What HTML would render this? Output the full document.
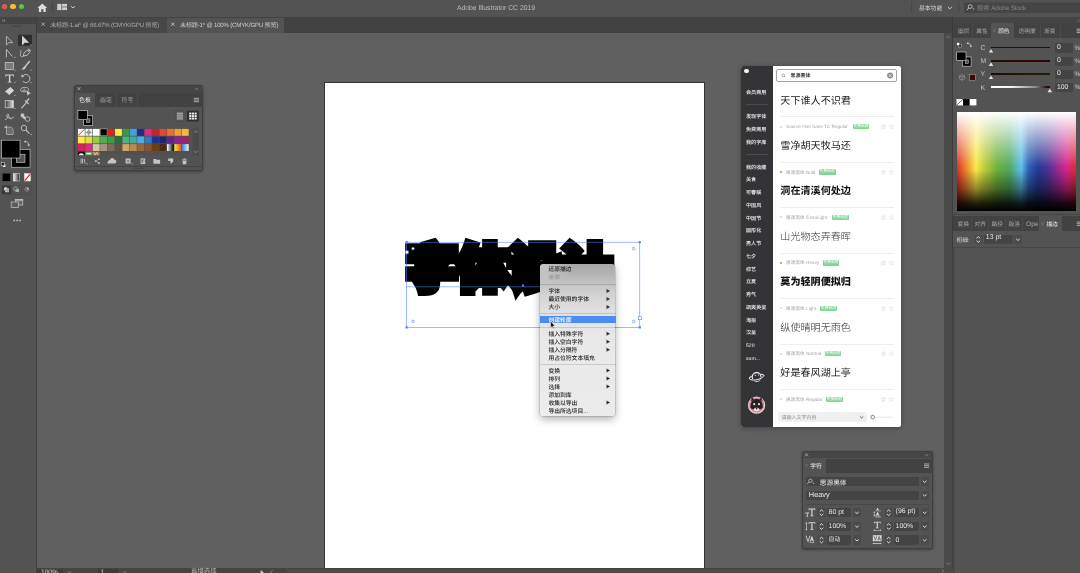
<!DOCTYPE html>
<html lang="zh"><head><meta charset="utf-8"><title>Adobe Illustrator CC 2019</title>
<style>
*{box-sizing:border-box;margin:0;padding:0}
html,body{width:1080px;height:573px;overflow:hidden;background:#606060}
body{position:relative;font-family:"Liberation Sans","Noto Sans CJK SC",sans-serif;color:#d6d6d6;font-size:6.5px;text-rendering:geometricPrecision}
.a{position:absolute}
.t{position:absolute;white-space:nowrap;line-height:10px;height:10px}
svg{position:absolute;overflow:visible}
/* ---------- chrome ---------- */
#topbar{left:0;top:0;width:1080px;height:17px;background:#535353}
#tabbar{left:36px;top:17px;width:918px;height:16px;background:#424242}
#tools{left:0;top:17px;width:36.5px;height:556px;background:#535353;border-right:1px solid #3e3e3e}
#toolhead{left:0;top:17px;width:36px;height:7px;background:#444}
#rdock{left:953px;top:17px;width:127px;height:556px;background:#535353}
#vscroll{left:944px;top:33px;width:9.4px;height:540px;background:#4a4a4a;border-right:1.2px solid #3b3b3b}
#status{left:37px;top:568px;width:916px;height:5px;background:#4a4a4a}
#artboard{left:323.5px;top:81.5px;width:381px;height:487px;background:#fff;border:0.7px solid #333}
.tab{top:17.5px;height:15px}
/* ---------- floating panels ---------- */
.panel{background:#535353;border:1px solid #3f3f3f;border-radius:2px;box-shadow:0 1px 3px rgba(0,0,0,.35)}
.ptitle{background:#464646;left:0;top:0;right:0;height:7px}
.ptabs{background:#424242;left:0;right:0}
.field{background:#444;border-radius:1px}
.dd{background:#4b4b4b;border-radius:1px}
</style></head><body><div id="root" style="position:absolute;left:0;top:0;width:1080px;height:573px;will-change:transform">

<!-- ===== canvas / artboard ===== -->
<div class="a" id="artboard"></div>

<!-- ===== top application bar ===== -->
<div class="a" id="topbar"></div>
<div class="a" id="tabbar"></div>
<div class="a" id="tools"></div>
<div class="a" id="toolhead"></div>
<div class="a" id="vscroll"></div>
<div class="a" id="status"></div>
<div class="a" id="rdock"></div>
<div class="a" style="left:952.2px;top:17px;width:1.2px;height:17px;background:#3b3b3b"></div>


<!-- top bar content -->
<div class="a" style="left:1.7px;top:3.6px;width:5.6px;height:5.6px;border-radius:50%;background:#ee5f57"></div>
<div class="a" style="left:3.7px;top:5.6px;width:1.6px;height:1.6px;border-radius:50%;background:#7c1510"></div>
<div class="a" style="left:10.2px;top:3.6px;width:5.6px;height:5.6px;border-radius:50%;background:#f6be2f"></div>
<div class="a" style="left:18.7px;top:3.6px;width:5.6px;height:5.6px;border-radius:50%;background:#5fc73a"></div>
<svg style="left:0;top:0" width="1080" height="17" viewBox="0 0 1080 17">
  <!-- home -->
  <path d="M42.3 3.6 L37.4 8 H38.9 V12 H41.2 V9.3 H43.4 V12 H45.7 V8 H47.2 Z" fill="#dcdcdc"/>
  <rect x="52.2" y="2.5" width="0.8" height="10.5" fill="#474747"/>
  <!-- layout icon -->
  <rect x="57.2" y="3.9" width="4.2" height="6.2" fill="#cfcfcf"/>
  <rect x="62.1" y="3.9" width="4.9" height="2.7" fill="#cfcfcf"/>
  <rect x="62.1" y="7.3" width="4.9" height="2.8" fill="#cfcfcf"/>
  <path d="M71 6.2 L73 8 L75 6.2" fill="none" stroke="#d8d8d8" stroke-width="0.9"/>
  <rect x="911.3" y="2" width="0.8" height="11" fill="#474747"/>
  <path d="M947.8 7 L949.8 8.8 L951.8 7" fill="none" stroke="#d8d8d8" stroke-width="0.9"/>
  <rect x="958.6" y="2" width="0.8" height="11" fill="#474747"/>
  <rect x="964" y="2.4" width="120" height="10.6" rx="1" fill="#454545"/>
  <circle cx="970.2" cy="6.6" r="1.9" fill="none" stroke="#cfcfcf" stroke-width="0.8"/>
  <path d="M968.8 8 L966.8 10.2" stroke="#cfcfcf" stroke-width="0.9"/>
  <path d="M972.6 8.6 h2 l-1 1.1z" fill="#cfcfcf"/>
</svg>
<div class="t" style="left:396px;width:200px;text-align:center;top:3.5px;font-size:6.9px;color:#bdbdbd;letter-spacing:-0.05px">Adobe Illustrator CC 2019</div>
<div class="t" style="left:919px;top:3.8px;font-size:5.8px;color:#dedede">基本功能</div>
<div class="t" style="left:977px;top:3.8px;font-size:6.4px;letter-spacing:-0.12px;color:#858585">搜索 Adobe Stock</div>

<!-- document tabs -->
<div class="a tab" style="left:37px;width:129.5px;background:#474747"></div>
<div class="a tab" style="left:167px;width:117px;background:#535353"></div>
<svg style="left:0;top:17px" width="300" height="16" viewBox="0 17 300 16">
  <path d="M41.6 22.6 l3.2 3.2 m0 -3.2 l-3.2 3.2" stroke="#cfcfcf" stroke-width="0.7"/>
  <path d="M171.2 22.6 l3.2 3.2 m0 -3.2 l-3.2 3.2" stroke="#e4e4e4" stroke-width="0.7"/>
</svg>
<div class="t" style="left:50.2px;top:21.2px;font-size:6.1px;letter-spacing:-0.19px;color:#adadad">未标题-1.ai* @ 66.67% (CMYK/GPU 预览)</div>
<div class="t" style="left:180px;top:21.2px;font-size:6.1px;letter-spacing:-0.19px;color:#d0d0d0">未标题-1* @ 100% (CMYK/GPU 预览)</div>


<!-- ===== tools panel ===== -->
<svg style="left:0;top:0" width="37" height="573" viewBox="0 0 37 573">
  <g fill="#8a8a8a"><rect x="2.4" y="19.4" width="0.9" height="2.4"/><rect x="4.2" y="19.4" width="0.9" height="2.4"/></g>
  <rect x="12" y="25.4" width="10" height="1.3" rx="0.6" fill="#454545"/>
  <!-- row 1 -->
  <rect x="18" y="34.8" width="14" height="11" rx="1" fill="#2e2e2e"/>
  <path d="M6.4 36.2 V45 L8.9 42.6 H12.8 Z" fill="none" stroke="#bcbcbc" stroke-width="0.9" stroke-linejoin="miter"/>
  <path d="M22 35.4 V45.4 L24.8 42.7 H29.2 Z" fill="#d4d4d4"/>
  <path d="M31.4 44.1 v1.3 h-1.3z" fill="#d4d4d4"/>
  <!-- row 2 -->
  <path d="M6.4 57.3 V49.4 L12.4 56.6" fill="none" stroke="#c6c6c6" stroke-width="0.9"/>
  <path d="M15.3 56.6 v1.3 h-1.3z" fill="#c6c6c6"/>
  <path d="M20.6 50.2 c1.2 1.6 -1.4 4.4 0.2 6 c0.8 0.8 2.2 0.4 3 -0.4" fill="none" stroke="#c6c6c6" stroke-width="0.8"/>
  <path d="M23.4 56 L24 52.8 L27.2 50.2 L29.6 52.4 L27.2 55.2 Z" fill="none" stroke="#c6c6c6" stroke-width="0.9"/>
  <path d="M27.8 49.6 l1 -1 l2.2 2.2 l-1 1z" fill="#c6c6c6"/>
  <!-- row 3 -->
  <rect x="5.2" y="62.6" width="8.2" height="6.8" fill="#7a7a7a" stroke="#c6c6c6" stroke-width="0.8"/>
  <path d="M15.3 69.2 v1.3 h-1.3z" fill="#c6c6c6"/>
  <path d="M29.4 61.6 L24.6 67.2" stroke="#c6c6c6" stroke-width="1.5" stroke-linecap="round"/>
  <path d="M24.8 66.6 c-1.6 0 -1.6 2 -3.6 2.8 c2.4 0.6 4.6 -0.4 4.6 -1.9z" fill="#c6c6c6"/>
  <path d="M31.4 69.2 v1.3 h-1.3z" fill="#c6c6c6"/>
  <!-- row 4 -->
  <path d="M5.3 74.6 h8.6 v2 h-0.7 l-0.4 -1.1 h-2.5 v6.1 l1.3 0.3 v0.6 h-4 v-0.6 l1.3 -0.3 v-6.1 h-2.5 l-0.4 1.1 h-0.7z" fill="#d4d4d4"/>
  <path d="M15.3 81.6 v1.3 h-1.3z" fill="#c6c6c6"/>
  <path d="M22.6 76 a4.1 4.1 0 1 1 0.2 5.3" fill="none" stroke="#c6c6c6" stroke-width="0.9"/>
  <path d="M21.2 74.4 l0.4 3.2 l2.8 -1.4z" fill="#c6c6c6"/>
  <path d="M31.4 81.6 v1.3 h-1.3z" fill="#c6c6c6"/>
  <!-- row 5 -->
  <path d="M5 91.4 L10.4 87 L14.2 90.6 L9 95.2 Z" fill="#d4d4d4"/>
  <path d="M6.6 92.8 l2.4 2.4" stroke="#535353" stroke-width="0.7"/>
  <path d="M15.3 94.6 v1.3 h-1.3z" fill="#c6c6c6"/>
  <path d="M21 88.6 c1.4 -1.6 6.6 -1.8 7.6 0.2 c0.6 1.4 -0.6 2.6 -2.2 2.8 c-2 0.4 -5 0.2 -5.8 -0.9 c-0.6 -0.8 -0.2 -1.6 0.4 -2.1z" fill="none" stroke="#c6c6c6" stroke-width="0.8"/>
  <path d="M22.2 90.2 h4 m-2 -1.6 v3" stroke="#c6c6c6" stroke-width="0.6"/>
  <path d="M26.6 90.6 L31 93.6 L28.8 94 L27.6 96 Z" fill="#d4d4d4"/>
  <!-- row 6 -->
  <defs><linearGradient id="gtool" x1="0" x2="1"><stop offset="0" stop-color="#3a3a3a"/><stop offset="1" stop-color="#e6e6e6"/></linearGradient>
  <linearGradient id="gbtn" x1="0" x2="1"><stop offset="0" stop-color="#fff"/><stop offset="1" stop-color="#222"/></linearGradient></defs>
  <rect x="5.2" y="100.6" width="8.2" height="7.2" fill="url(#gtool)" stroke="#c6c6c6" stroke-width="0.8"/>
  <path d="M15.3 107.6 v1.3 h-1.3z" fill="#c6c6c6"/>
  <path d="M21.4 108.4 L26.6 102.4" stroke="#c6c6c6" stroke-width="1.1"/>
  <path d="M25.6 101 l2.6 2.4 m-1.8 -1.8 l2.4 -2.6" stroke="#c6c6c6" stroke-width="1.4" stroke-linecap="round"/>
  <!-- row 7 -->
  <path d="M5 119.8 c2 -0.6 3 -2.4 3.2 -5.6 m-2.4 1 c2.4 3.4 5.2 4 8.4 1.6 m-6.4 -3.2 c0.2 2.4 1.6 4.4 3.6 5.6" fill="none" stroke="#c6c6c6" stroke-width="0.8"/>
  <rect x="20.8" y="113.6" width="3.4" height="3.4" fill="#c6c6c6"/>
  <path d="M22.4 116 l3 2.6" stroke="#c6c6c6" stroke-width="2.4"/>
  <circle cx="27.6" cy="119" r="2.3" fill="#535353" stroke="#c6c6c6" stroke-width="0.8"/>
  <!-- row 8 -->
  <path d="M6.6 125.4 v9 h6.4 v-5.4 l-1.8 -1.8 h-6.8 M4.4 127.2 h2.2" fill="none" stroke="#c6c6c6" stroke-width="0.8"/>
  <rect x="7.2" y="127.8" width="5.2" height="6" fill="#6e6e6e"/>
  <circle cx="23.9" cy="128" r="2.7" fill="none" stroke="#c6c6c6" stroke-width="0.9"/>
  <path d="M25.9 130 l3.6 3.6" stroke="#c6c6c6" stroke-width="1.1"/>
  <path d="M31.8 133.6 v1.3 h-1.3z" fill="#c6c6c6"/>
  <!-- fill / stroke -->
  <rect x="11.6" y="149.6" width="18.4" height="17.6" fill="#000" stroke="#d0d0d0" stroke-width="0.6"/>
  <rect x="16.4" y="154.2" width="8.6" height="8.4" fill="#535353" stroke="#d0d0d0" stroke-width="0.6"/>
  <rect x="1.6" y="140.2" width="18.4" height="17.8" fill="#000" stroke="#d0d0d0" stroke-width="0.6"/>
  <path d="M25.2 141.6 c2.4 0 3.6 1.2 3.6 3.6" fill="none" stroke="#c6c6c6" stroke-width="0.8"/>
  <path d="M25.6 140.2 v2.8 l-1.8 -1.4z M27.4 144.6 h2.8 l-1.4 1.8z" fill="#c6c6c6"/>
  <rect x="2.6" y="164" width="3.2" height="3.2" fill="#fff" stroke="#222" stroke-width="0.4"/>
  <rect x="1.2" y="162.6" width="3.2" height="3.2" fill="#222" stroke="#ddd" stroke-width="0.5"/>
  <!-- color/gradient/none -->
  <rect x="1.9" y="172.8" width="9" height="9" fill="#474747"/>
  <rect x="2.7" y="173.6" width="7.4" height="7.4" fill="#000"/>
  <rect x="13.4" y="173.6" width="6.2" height="7.4" fill="url(#gbtn)" stroke="#e8e8e8" stroke-width="0.5"/>
  <rect x="24.4" y="173.6" width="6.2" height="7.4" fill="#fff" stroke="#e8e8e8" stroke-width="0.5"/>
  <path d="M24.6 180.8 L30.4 173.8" stroke="#e0261c" stroke-width="1.2"/>
  <!-- draw modes -->
  <rect x="1.9" y="185.4" width="9.4" height="8.8" fill="#3a3a3a"/>
  <rect x="11.6" y="185.4" width="10" height="8.8" fill="none" stroke="#4b4b4b" stroke-width="0.5"/>
  <rect x="21.6" y="185.4" width="10" height="8.8" fill="none" stroke="#4b4b4b" stroke-width="0.5"/>
  <circle cx="5.6" cy="188.8" r="1.9" fill="#c6c6c6"/><rect x="5.4" y="188.8" width="3.4" height="3.2" fill="#aaa" stroke="#ddd" stroke-width="0.4"/>
  <circle cx="15.6" cy="188.8" r="1.9" fill="none" stroke="#c6c6c6" stroke-width="0.6"/><rect x="15.6" y="189" width="3.4" height="3" fill="#aaa"/>
  <circle cx="26.8" cy="189.2" r="1.9" fill="none" stroke="#aaa" stroke-width="0.6"/><rect x="26.8" y="188" width="1.6" height="1.6" fill="#ccc"/>
  <!-- screen mode -->
  <rect x="15.4" y="199.4" width="7.4" height="5.6" fill="#666" stroke="#c6c6c6" stroke-width="0.7"/>
  <rect x="11.2" y="202" width="7.4" height="5.6" fill="#5d5d5d" stroke="#c6c6c6" stroke-width="0.7"/>
  <rect x="15.4" y="199.4" width="7.4" height="1.2" fill="#c6c6c6"/>
  <g fill="#c6c6c6"><circle cx="14.2" cy="220.4" r="0.85"/><circle cx="17.1" cy="220.4" r="0.85"/><circle cx="20" cy="220.4" r="0.85"/></g>
</svg>


<!-- ===== swatches panel ===== -->
<div class="a panel" style="left:74.3px;top:85px;width:129px;height:85.8px"></div>
<div class="a" style="left:75px;top:85.8px;width:127.6px;height:6.9px;background:#464646"></div>
<div class="a" style="left:75px;top:92.7px;width:127.6px;height:14px;background:#424242"></div>
<div class="a" style="left:75px;top:92.7px;width:20.4px;height:14px;background:#535353"></div>
<div class="a" style="left:116.2px;top:93px;width:0.7px;height:13.7px;background:#4b4b4b"></div>
<div class="a" style="left:137.3px;top:93px;width:0.7px;height:13.7px;background:#4b4b4b"></div>
<div class="a" style="left:75px;top:166.1px;width:127.6px;height:0.8px;background:#434343"></div>
<div class="a" style="left:134px;top:167.6px;width:10px;height:1.4px;background:#474747"></div>
<div class="t" style="left:79px;top:95.8px;font-size:5.9px;color:#ececec">色板</div>
<div class="t" style="left:100px;top:95.8px;font-size:5.9px;color:#a2a2a2">画笔</div>
<div class="t" style="left:121.5px;top:95.8px;font-size:5.9px;color:#a2a2a2">符号</div>
<svg style="left:0;top:0" width="220" height="180" viewBox="0 0 220 180">
  <defs>
    <linearGradient id="swg1" x1="0" x2="1"><stop offset="0" stop-color="#fff"/><stop offset="1" stop-color="#000"/></linearGradient>
    <linearGradient id="swg2" x1="0" x2="1"><stop offset="0" stop-color="#fbe83a"/><stop offset="1" stop-color="#e8541f"/></linearGradient>
    <linearGradient id="swg3" x1="0" x2="1"><stop offset="0" stop-color="#2f7fd0"/><stop offset="1" stop-color="#eef4fb"/></linearGradient>
    <clipPath id="swclip"><rect x="77" y="128" width="113" height="27.3"/></clipPath>
  </defs>
  <path d="M77.4 87.2 l3 3 m0 -3 l-3 3" stroke="#c4c4c4" stroke-width="0.7"/>
  <path d="M196.3 87.9 l-1 1 l1 1 m1.6 -2 l-1 1 l1 1" stroke="#9a9a9a" stroke-width="0.5" fill="none"/>
  <path d="M193.8 98.3 h5.2 M193.8 100 h5.2 M193.8 101.7 h5.2" stroke="#c4c4c4" stroke-width="0.8"/>
  <!-- fill / stroke proxies -->
  <rect x="83.7" y="115.8" width="9" height="9.5" fill="#000" stroke="#d9d9d9" stroke-width="0.6"/>
  <rect x="86.6" y="118.8" width="3.4" height="3.6" fill="#535353" stroke="#d9d9d9" stroke-width="0.5"/>
  <rect x="77.9" y="110.6" width="9.4" height="9" fill="#000" stroke="#d9d9d9" stroke-width="0.6"/>
  <!-- list / grid toggle -->
  <rect x="174.4" y="110.6" width="11" height="10.9" fill="none" stroke="#494949" stroke-width="0.6"/>
  <path d="M176.8 113.2 h6.2 M176.8 115.1 h6.2 M176.8 117 h6.2 M176.8 118.9 h6.2" stroke="#ececec" stroke-width="0.75"/>
  <rect x="187" y="110.6" width="11.8" height="10.9" fill="#303030"/>
  <g fill="#f0f0f0">
    <rect x="189.2" y="112.6" width="2.1" height="1.9"/><rect x="191.9" y="112.6" width="2.1" height="1.9"/><rect x="194.6" y="112.6" width="2.1" height="1.9"/>
    <rect x="189.2" y="115.1" width="2.1" height="1.9"/><rect x="191.9" y="115.1" width="2.1" height="1.9"/><rect x="194.6" y="115.1" width="2.1" height="1.9"/>
    <rect x="189.2" y="117.6" width="2.1" height="1.9"/><rect x="191.9" y="117.6" width="2.1" height="1.9"/><rect x="194.6" y="117.6" width="2.1" height="1.9"/>
  </g>
  <!-- swatch grid -->
  <rect x="77.2" y="128.3" width="112.4" height="27" fill="#505050"/>
  <rect x="77.90" y="128.9" width="6.9" height="6.9" fill="#fff"/><path d="M78.20 135.50 L84.50 129.20" stroke="#e0261c" stroke-width="1"/>
  <rect x="85.32" y="128.9" width="6.9" height="6.9" fill="#f4f4f4"/><circle cx="88.77" cy="132.35" r="1.6" fill="none" stroke="#555" stroke-width="0.5"/><path d="M85.32 132.35 h6.9 M88.77 128.9 v6.9" stroke="#555" stroke-width="0.5"/>
  <rect x="92.74" y="128.9" width="6.9" height="6.9" fill="#ffffff"/>
  <rect x="100.16" y="128.9" width="6.9" height="6.9" fill="#000000" stroke="#cfcfcf" stroke-width="0.5"/>
  <rect x="107.58" y="128.9" width="6.9" height="6.9" fill="#d9261c"/>
  <rect x="115.00" y="128.9" width="6.9" height="6.9" fill="#fdec3f"/>
  <rect x="122.42" y="128.9" width="6.9" height="6.9" fill="#3a9949"/>
  <rect x="129.84" y="128.9" width="6.9" height="6.9" fill="#3fa0e2"/>
  <rect x="137.26" y="128.9" width="6.9" height="6.9" fill="#212a8c"/>
  <rect x="144.68" y="128.9" width="6.9" height="6.9" fill="#dd2a8a"/>
  <rect x="152.10" y="128.9" width="6.9" height="6.9" fill="#be2630"/>
  <rect x="159.52" y="128.9" width="6.9" height="6.9" fill="#e24a2d"/>
  <rect x="166.94" y="128.9" width="6.9" height="6.9" fill="#e8702a"/>
  <rect x="174.36" y="128.9" width="6.9" height="6.9" fill="#f0a02f"/>
  <rect x="181.78" y="128.9" width="6.9" height="6.9" fill="#f5b942"/>
  <rect x="77.90" y="136.5" width="6.9" height="6.9" fill="#fce94a"/>
  <rect x="85.32" y="136.5" width="6.9" height="6.9" fill="#e0e03f"/>
  <rect x="92.74" y="136.5" width="6.9" height="6.9" fill="#9dcb3f"/>
  <rect x="100.16" y="136.5" width="6.9" height="6.9" fill="#4db048"/>
  <rect x="107.58" y="136.5" width="6.9" height="6.9" fill="#3e9a48"/>
  <rect x="115.00" y="136.5" width="6.9" height="6.9" fill="#2a6e3c"/>
  <rect x="122.42" y="136.5" width="6.9" height="6.9" fill="#4eb37c"/>
  <rect x="129.84" y="136.5" width="6.9" height="6.9" fill="#47a8a0"/>
  <rect x="137.26" y="136.5" width="6.9" height="6.9" fill="#4faee0"/>
  <rect x="144.68" y="136.5" width="6.9" height="6.9" fill="#3177c0"/>
  <rect x="152.10" y="136.5" width="6.9" height="6.9" fill="#1f3291"/>
  <rect x="159.52" y="136.5" width="6.9" height="6.9" fill="#1d2470"/>
  <rect x="166.94" y="136.5" width="6.9" height="6.9" fill="#5d2391"/>
  <rect x="174.36" y="136.5" width="6.9" height="6.9" fill="#8e2292"/>
  <rect x="181.78" y="136.5" width="6.9" height="6.9" fill="#a02168"/>
  <rect x="77.90" y="144.1" width="6.9" height="6.9" fill="#d2245a"/>
  <rect x="85.32" y="144.1" width="6.9" height="6.9" fill="#dc2c87"/>
  <rect x="92.74" y="144.1" width="6.9" height="6.9" fill="#d6c6a8"/>
  <rect x="100.16" y="144.1" width="6.9" height="6.9" fill="#a89382"/>
  <rect x="107.58" y="144.1" width="6.9" height="6.9" fill="#7c6b5b"/>
  <rect x="115.00" y="144.1" width="6.9" height="6.9" fill="#65503f"/>
  <rect x="122.42" y="144.1" width="6.9" height="6.9" fill="#d2a76a"/>
  <rect x="129.84" y="144.1" width="6.9" height="6.9" fill="#b98a54"/>
  <rect x="137.26" y="144.1" width="6.9" height="6.9" fill="#9a683a"/>
  <rect x="144.68" y="144.1" width="6.9" height="6.9" fill="#86532a"/>
  <rect x="152.10" y="144.1" width="6.9" height="6.9" fill="#693f14"/>
  <rect x="159.52" y="144.1" width="6.9" height="6.9" fill="#4a2a14"/>
  <rect x="166.94" y="144.1" width="6.9" height="6.9" fill="url(#swg1)"/>
  <rect x="174.36" y="144.1" width="6.9" height="6.9" fill="url(#swg2)"/>
  <rect x="181.78" y="144.1" width="6.9" height="6.9" fill="url(#swg3)"/>
  <g clip-path="url(#swclip)"><rect x="77.90" y="151.7" width="6.9" height="6.9" fill="#111"/><circle cx="81.35" cy="155.89999999999998" r="2.6" fill="#f2f2f2"/><rect x="85.32" y="151.7" width="6.9" height="6.9" fill="#6aa84a"/><rect x="86.52" y="152.89999999999998" width="4.4" height="1.4" fill="#e9f2d8"/><rect x="92.74" y="151.7" width="6.9" height="6.9" fill="#a87b4f"/><path d="M93.54 152.29999999999998 l1.6 3 l1.4 -3 l1.6 3" stroke="#e8d3b0" stroke-width="0.8" fill="none"/></g>
  <!-- scrollbar -->
  <rect x="192.6" y="128.3" width="6.2" height="27" fill="#4a4a4a"/>
  <path d="M193.8 132.6 l1.9 -1.7 l1.9 1.7 M193.8 151 l1.9 1.7 l1.9 -1.7" stroke="#9d9d9d" stroke-width="0.7" fill="none"/>
  <!-- bottom icons -->
  <g fill="#c4c4c4">
    <path d="M80.6 158.8 h0.9 v4.6 h-0.9z M82.1 158.8 h0.9 v4.6 h-0.9z M83.6 159 l0.9 -0.2 l1 4.4 l-0.9 0.2z M86.6 163 h0.8 v1.2 h-0.8z"/>
    <circle cx="95.6" cy="161.1" r="0.9"/><circle cx="98.9" cy="159.2" r="0.9"/><circle cx="98.9" cy="163" r="0.9"/>
    <path d="M109.2 163.6 a1.9 1.9 0 0 1 0.6 -3.7 a2.5 2.5 0 0 1 4.8 -0.2 a2 2 0 0 1 0.4 3.9z M107.2 162.6 h1.4 v0.8 h-1.4z"/>
    <path d="M125.6 158.6 h5 v5 h-5z M131.8 163 h0.8 v1.2 h-0.8z"/>
    <path d="M140.6 158.4 h4.6 v5.6 h-4.6z"/>
    <path d="M153.4 159 h2.4 l0.7 0.8 h3.6 v3.9 h-6.7z"/>
    <path d="M168.2 158.6 h5 v3 l-1.8 1.9 h-0.9 v-2.5 h-2.3z"/>
    <path d="M182 159.4 h5 v0.8 h-5z M183.6 158.5 h1.8 v0.8 h-1.8z M182.5 160.7 h4 l-0.3 3.5 h-3.4z"/>
  </g>
  <path d="M96 161 l2.8 -1.7 M96 161.2 l2.8 1.7" stroke="#c4c4c4" stroke-width="0.5"/>
  <path d="M126.7 161 h2.8 M128.1 159.6 v2.8" stroke="#535353" stroke-width="0.6"/>
  <rect x="141.6" y="159.6" width="2.6" height="3.2" fill="#535353"/><rect x="142.6" y="160.4" width="1.6" height="2.4" fill="#c4c4c4"/>
</svg>


<!-- ===== right dock ===== -->
<div class="a" style="left:953px;top:17px;width:127px;height:6.4px;background:#454545"></div>
<div class="a" style="left:953px;top:23.4px;width:127px;height:14.4px;background:#424242"></div>
<div class="a" style="left:990.8px;top:23.4px;width:23.2px;height:14.4px;background:#535353"></div>
<div class="a" style="left:972.3px;top:23.8px;width:0.7px;height:14px;background:#4c4c4c"></div>
<div class="a" style="left:1039.8px;top:23.8px;width:0.7px;height:14px;background:#4c4c4c"></div>
<div class="a" style="left:1060px;top:23.8px;width:0.7px;height:14px;background:#4c4c4c"></div>
<div class="t" style="left:958px;top:26.8px;font-size:5.7px;color:#a6a6a6">图层</div>
<div class="t" style="left:976.3px;top:26.8px;font-size:5.7px;color:#a6a6a6">属性</div>
<div class="t" style="left:998.2px;top:26.8px;font-size:5.7px;color:#f0f0f0">颜色</div>
<div class="t" style="left:1018.6px;top:26.8px;font-size:5.7px;color:#a6a6a6">透明度</div>
<div class="t" style="left:1044px;top:26.8px;font-size:5.7px;color:#a6a6a6">渐变</div>
<!-- lower tab group -->
<div class="a" style="left:953px;top:214.4px;width:127px;height:1px;background:#454545"></div>
<div class="a" style="left:953px;top:216.4px;width:127px;height:14.2px;background:#424242"></div>
<div class="a" style="left:1039px;top:216.4px;width:23px;height:14.2px;background:#535353"></div>
<div class="a" style="left:970.8px;top:216.8px;width:0.7px;height:13.6px;background:#4c4c4c"></div>
<div class="a" style="left:987.9px;top:216.8px;width:0.7px;height:13.6px;background:#4c4c4c"></div>
<div class="a" style="left:1005px;top:216.8px;width:0.7px;height:13.6px;background:#4c4c4c"></div>
<div class="a" style="left:1021.8px;top:216.8px;width:0.7px;height:13.6px;background:#4c4c4c"></div>
<svg style="left:0;top:0" width="1080" height="573" viewBox="0 0 1080 573">
  <path d="M994.2 29.2 l1 1.5 l-1 1.5 l-1 -1.5z" fill="none" stroke="#8a8a8a" stroke-width="0.4"/>
  <path d="M1076.6 29.2 h4 M1076.6 30.9 h4 M1076.6 32.6 h4" stroke="#c6c6c6" stroke-width="0.8"/>
  <path d="M1077.6 19.6 l1 1 l-1 1 m1.6 -2 l1 1 l-1 1" stroke="#9a9a9a" stroke-width="0.5" fill="none"/>
  <!-- default / swap -->
  <rect x="958.4" y="44.2" width="2.8" height="2.8" fill="#111" stroke="#ddd" stroke-width="0.45"/>
  <rect x="956.8" y="42.6" width="2.8" height="2.8" fill="#fff" stroke="#333" stroke-width="0.4"/>
  <path d="M967.8 43.2 c2 0 3 1 3 3" fill="none" stroke="#cfcfcf" stroke-width="0.7"/>
  <path d="M968.2 42 v2.4 l-1.6 -1.2z M969.6 45.8 h2.4 l-1.2 1.6z" fill="#cfcfcf"/>
  <!-- fill / stroke -->
  <rect x="962.3" y="57" width="8.8" height="9.2" fill="#000" stroke="#d9d9d9" stroke-width="0.6"/>
  <rect x="965.2" y="60" width="3.2" height="3.4" fill="#535353" stroke="#d9d9d9" stroke-width="0.5"/>
  <rect x="956.7" y="52" width="9.3" height="8.4" fill="#000" stroke="#d9d9d9" stroke-width="0.6"/>
  <!-- cube + out-of-gamut swatch -->
  <path d="M962 74.6 l2.6 1.3 v3 l-2.6 1.4 l-2.6 -1.4 v-3z M959.4 75.9 l2.6 1.3 l2.6 -1.3 M962 77.2 v3" fill="none" stroke="#a8a8a8" stroke-width="0.55"/>
  <rect x="969.4" y="74.3" width="6.2" height="6.4" fill="#3b0a0a" stroke="#bdbdbd" stroke-width="0.5"/>
  <!-- none / black / white -->
  <rect x="956.5" y="99" width="6.6" height="6.4" fill="#fff"/>
  <path d="M956.8 105.1 L962.8 99.3" stroke="#e0261c" stroke-width="0.9"/>
  <rect x="963.1" y="99" width="6.6" height="6.4" fill="#0a0406"/>
  <rect x="969.7" y="99" width="6.7" height="6.4" fill="#fff"/>
  <path d="M946.4 38.2 l2 -1.8 l2 1.8 M946.4 562.6 l2 1.8 l2 -1.8" stroke="#8e8e8e" stroke-width="0.7" fill="none"/>
  <!-- lower tabs: menu -->
  <path d="M1076.8 222 h4 M1076.8 223.7 h4 M1076.8 225.4 h4" stroke="#c6c6c6" stroke-width="0.8"/>
  <path d="M1042.6 222.2 l1 1.5 l-1 1.5 l-1 -1.5z" fill="none" stroke="#8a8a8a" stroke-width="0.4"/>
  <!-- stroke weight stepper / dropdown -->
  <rect x="974.2" y="235" width="8.2" height="8.8" rx="0.8" fill="#4b4b4b"/>
  <path d="M976.5 238.3 l1.8 -1.6 l1.8 1.6 M976.5 240.7 l1.8 1.6 l1.8 -1.6" stroke="#e4e4e4" stroke-width="0.95" fill="none"/>
  <rect x="984" y="235" width="28.6" height="8.8" rx="0.8" fill="#444"/>
  <rect x="1014" y="235" width="7.9" height="8.8" rx="0.8" fill="#4b4b4b"/>
  <path d="M1016.2 238.8 l1.8 1.7 l1.8 -1.7" stroke="#e4e4e4" stroke-width="0.95" fill="none"/>
</svg>

<div class="t" style="left:980.4px;top:43.8px;font-size:7px;color:#bdbdbd">C</div>
<div class="a" style="left:991px;top:46.5px;width:58.8px;height:1.9px;background:linear-gradient(90deg,#2a0a08,#0a123a 55%,#0a0a52)"></div>
<div class="a field" style="left:1055px;top:43.2px;width:17.8px;height:9.4px"></div>
<div class="t" style="left:1057px;top:42.8px;font-size:6.8px;color:#e6e6e6">0</div>
<div class="t" style="left:1074.6px;top:43.7px;font-size:6.6px;color:#cfcfcf">%</div>
<svg style="left:0;top:0" width="1080" height="573"><path d="M988.8 52.6 L991 48.9 L993.2 52.6 Z" fill="#e2e2e2"/></svg>
<div class="t" style="left:980.4px;top:57.1px;font-size:7px;color:#bdbdbd">M</div>
<div class="a" style="left:991px;top:59.8px;width:58.8px;height:1.9px;background:linear-gradient(90deg,#1e0c08,#3a0508 60%,#330408)"></div>
<div class="a field" style="left:1055px;top:56.5px;width:17.8px;height:9.4px"></div>
<div class="t" style="left:1057px;top:56.1px;font-size:6.8px;color:#e6e6e6">0</div>
<div class="t" style="left:1074.6px;top:57.0px;font-size:6.6px;color:#cfcfcf">%</div>
<svg style="left:0;top:0" width="1080" height="573"><path d="M988.8 65.9 L991 62.2 L993.2 65.9 Z" fill="#e2e2e2"/></svg>
<div class="t" style="left:980.4px;top:70.3px;font-size:7px;color:#bdbdbd">Y</div>
<div class="a" style="left:991px;top:73.0px;width:58.8px;height:1.9px;background:linear-gradient(90deg,#1e0c08,#2a1804 60%,#241a04)"></div>
<div class="a field" style="left:1055px;top:69.7px;width:17.8px;height:9.4px"></div>
<div class="t" style="left:1057px;top:69.3px;font-size:6.8px;color:#e6e6e6">0</div>
<div class="t" style="left:1074.6px;top:70.2px;font-size:6.6px;color:#cfcfcf">%</div>
<svg style="left:0;top:0" width="1080" height="573"><path d="M988.8 79.1 L991 75.4 L993.2 79.1 Z" fill="#e2e2e2"/></svg>
<div class="t" style="left:980.4px;top:83.5px;font-size:7px;color:#bdbdbd">K</div>
<div class="a" style="left:991px;top:86.2px;width:58.8px;height:1.9px;background:linear-gradient(90deg,#fff,#f2f2f2 35%,#8a8a8a 75%,#2a0a0a 95%,#200808)"></div>
<div class="a field" style="left:1055px;top:82.9px;width:17.8px;height:9.4px"></div>
<div class="t" style="left:1057px;top:82.5px;font-size:6.8px;color:#e6e6e6">100</div>
<div class="t" style="left:1074.6px;top:83.4px;font-size:6.6px;color:#cfcfcf">%</div>
<svg style="left:0;top:0" width="1080" height="573"><path d="M1047.6 92.3 L1049.8 88.6 L1052.0 92.3 Z" fill="#e2e2e2"/></svg>
<!-- spectrum -->
<div class="a" style="left:957px;top:111.6px;width:118.8px;height:99px;background:linear-gradient(180deg,#fff 0%,rgba(255,255,255,0.7) 16%,rgba(255,255,255,0) 56%,rgba(0,0,0,0) 58%,rgba(0,0,0,0.42) 78%,rgba(0,0,0,0.85) 92%,#000 100%),linear-gradient(90deg,#dc2f26 0%,#ee8a2d 8%,#f8ea48 16%,#b4c83a 24%,#6cb03a 34%,#4fa85e 44%,#5cc0ea 54%,#2f62b4 60%,#223a96 68%,#4a3294 76%,#922a92 84%,#d8248c 92%,#dd2a30 100%)"></div>
<div class="t" style="left:957.6px;top:219.7px;font-size:5.7px;color:#a6a6a6">变换</div>
<div class="t" style="left:974.6px;top:219.7px;font-size:5.7px;color:#a6a6a6">对齐</div>
<div class="t" style="left:991.6px;top:219.7px;font-size:5.7px;color:#a6a6a6">路径</div>
<div class="t" style="left:1008.6px;top:219.7px;font-size:5.7px;color:#a6a6a6">段落</div>
<div class="t" style="left:1026px;top:219.9px;font-size:6.6px;color:#a6a6a6;width:12.6px;overflow:hidden">Ope</div>
<div class="t" style="left:1046.4px;top:219.7px;font-size:5.7px;color:#f0f0f0">描边</div>
<div class="t" style="left:956.4px;top:235.8px;font-size:5.8px;color:#d2d2d2">粗细:</div>
<div class="t" style="left:985.8px;top:233.2px;font-size:6.9px;color:#e6e6e6">13 pt</div>
<div class="a" style="left:953px;top:247px;width:127px;height:0.8px;background:#474747"></div>
<div class="a" style="left:953px;top:247.8px;width:1.6px;height:326px;background:#4a4a4a"></div>


<!-- ===== font manager plug-in panel ===== -->
<style>
.sb{left:746px;font-size:5.1px;font-weight:500;color:#f2f2f2}
.smp{left:780.3px;font-size:10.1px;line-height:16px;height:16px}
.lb{left:786px;font-size:4.7px;color:#a4a4a4}
.bd{font-size:3.75px;line-height:5.3px;height:5.3px;padding:0 0.9px;background:#84d497;color:#fff;border-radius:0.8px}
</style>
<div class="a" style="left:740.6px;top:66.2px;width:160.2px;height:360.4px;border-radius:2.2px;background:#fff;box-shadow:0 1px 5px rgba(0,0,0,.35);overflow:hidden">
  <div class="a" style="left:0;top:0;width:32.4px;height:361px;background:#343336"></div>
</div>
<div class="a" style="left:744.4px;top:68.8px;width:4.4px;height:4.4px;border-radius:50%;background:#f4f4f4"></div>
<div class="a" style="left:746px;top:103.6px;width:22px;height:0.6px;background:#4b4a4e"></div>
<div class="a" style="left:746px;top:154.3px;width:22px;height:0.6px;background:#4b4a4e"></div>
<div class="t sb" style="top:87.7px">会员商用</div>
<div class="t sb" style="top:112.2px">发现字体</div>
<div class="t sb" style="top:125.2px">免费商用</div>
<div class="t sb" style="top:137.8px">我的字库</div>
<div class="t sb" style="top:162.7px">我的收藏</div>
<div class="t sb" style="top:175.3px">美食</div>
<div class="t sb" style="top:188.1px">可春联</div>
<div class="t sb" style="top:200.8px">中国风</div>
<div class="t sb" style="top:213.6px">中国节</div>
<div class="t sb" style="top:226.3px">圆形化</div>
<div class="t sb" style="top:239.0px">男人节</div>
<div class="t sb" style="top:251.8px">七夕</div>
<div class="t sb" style="top:264.6px">综艺</div>
<div class="t sb" style="top:277.3px">立夏</div>
<div class="t sb" style="top:290.0px">秀气</div>
<div class="t sb" style="top:302.8px">飒爽英姿</div>
<div class="t sb" style="top:315.5px">海报</div>
<div class="t sb" style="top:328.3px">汉呈</div>
<div class="t sb" style="top:341.0px">520</div>
<div class="t sb" style="top:353.7px">sum...</div>

<div class="a" style="left:776.4px;top:69.2px;width:121px;height:12.8px;border:0.8px solid #a4a4a4;border-radius:2px;background:#fff"></div>
<div class="t" style="left:790.4px;top:70.6px;font-size:5px;font-weight:700;color:#333">思源黑体</div>
<div class="a" style="left:780px;top:116.3px;width:114px;height:0.7px;background:#eeeeee"></div>
<div class="a" style="left:780px;top:161.8px;width:114px;height:0.7px;background:#eeeeee"></div>
<div class="a" style="left:780px;top:207.2px;width:114px;height:0.7px;background:#eeeeee"></div>
<div class="a" style="left:780px;top:252.7px;width:114px;height:0.7px;background:#eeeeee"></div>
<div class="a" style="left:780px;top:298.1px;width:114px;height:0.7px;background:#eeeeee"></div>
<div class="a" style="left:780px;top:343.5px;width:114px;height:0.7px;background:#eeeeee"></div>
<div class="a" style="left:780px;top:388.9px;width:114px;height:0.7px;background:#eeeeee"></div>

<div class="t smp" style="top:94.0px;font-weight:400;color:#1a1a1a">天下谁人不识君</div>
<div class="t smp" style="top:139.1px;font-weight:400;color:#1a1a1a">雪净胡天牧马还</div>
<div class="t smp" style="top:184.2px;font-weight:700;color:#111">洞在清溪何处边</div>
<div class="t smp" style="top:229.8px;font-weight:200;color:#333">山光物态弄春晖</div>
<div class="t smp" style="top:275.1px;font-weight:900;color:#111">莫为轻阴便拟归</div>
<div class="t smp" style="top:320.7px;font-weight:300;color:#222">纵使晴明无雨色</div>
<div class="t smp" style="top:366.1px;font-weight:400;color:#1a1a1a">好是春风湖上亭</div>

<div class="a" style="left:779.6px;top:125.6px;width:2px;height:2px;border-radius:50%;background:#d2d2d2"></div><div class="t lb" style="top:122.1px">Source Han Sans TC Regular</div><div class="t bd" style="left:852.6px;top:124.0px">免费商用</div>
<div class="a" style="left:779.6px;top:171.0px;width:2px;height:2px;border-radius:50%;background:#4fbf4a"></div><div class="t lb" style="top:167.5px">思源黑体 Bold</div><div class="t bd" style="left:818.8px;top:169.4px">免费商用</div>
<div class="a" style="left:779.6px;top:216.4px;width:2px;height:2px;border-radius:50%;background:#d2d2d2"></div><div class="t lb" style="top:212.9px">思源黑体 ExtraLight</div><div class="t bd" style="left:831.8px;top:214.8px">免费商用</div>
<div class="a" style="left:779.6px;top:261.9px;width:2px;height:2px;border-radius:50%;background:#4fbf4a"></div><div class="t lb" style="top:258.4px">思源黑体 Heavy</div><div class="t bd" style="left:822.6px;top:260.3px">免费商用</div>
<div class="a" style="left:779.6px;top:307.3px;width:2px;height:2px;border-radius:50%;background:#d2d2d2"></div><div class="t lb" style="top:303.8px">思源黑体 Light</div><div class="t bd" style="left:820px;top:305.7px">免费商用</div>
<div class="a" style="left:779.6px;top:352.7px;width:2px;height:2px;border-radius:50%;background:#d2d2d2"></div><div class="t lb" style="top:349.2px">思源黑体 Normal</div><div class="t bd" style="left:824.6px;top:351.1px">免费商用</div>
<div class="a" style="left:779.6px;top:398.1px;width:2px;height:2px;border-radius:50%;background:#d2d2d2"></div><div class="t lb" style="top:394.6px">思源黑体 Regular</div><div class="t bd" style="left:825.8px;top:396.5px">免费商用</div>

<div class="a" style="left:778px;top:412.3px;width:89px;height:10px;border-radius:2px;background:#f0f0f2"></div>
<div class="t" style="left:781.6px;top:412.9px;font-size:5px;color:#8e8e8e">请输入文字内容</div>
<svg style="left:0;top:0" width="1080" height="573" viewBox="0 0 1080 573">
  <circle cx="783.4" cy="75.4" r="1.3" fill="none" stroke="#555" stroke-width="0.5"/><path d="M784.4 76.4 l0.9 0.9" stroke="#555" stroke-width="0.5"/>
  <circle cx="890.1" cy="75.6" r="3" fill="#8d8d8d"/><path d="M888.8 74.3 l2.6 2.6 m0 -2.6 l-2.6 2.6" stroke="#fff" stroke-width="0.7"/>
  <g fill="none" stroke="#d4d4d4" stroke-width="0.45">
  <path d="M883.5 124.4 l0.7 1.5 l1.6 0.2 l-1.2 1.1 l0.3 1.6 l-1.4 -0.8 l-1.4 0.8 l0.3 -1.6 l-1.2 -1.1 l1.6 -0.2z M881.6 128.8 l3.8 -4.4" /><path d="M891.4 124.4 l0.7 1.5 l1.6 0.2 l-1.2 1.1 l0.3 1.6 l-1.4 -0.8 l-1.4 0.8 l0.3 -1.6 l-1.2 -1.1 l1.6 -0.2z"/>
<path d="M883.5 169.8 l0.7 1.5 l1.6 0.2 l-1.2 1.1 l0.3 1.6 l-1.4 -0.8 l-1.4 0.8 l0.3 -1.6 l-1.2 -1.1 l1.6 -0.2z M881.6 174.2 l3.8 -4.4" /><path d="M891.4 169.8 l0.7 1.5 l1.6 0.2 l-1.2 1.1 l0.3 1.6 l-1.4 -0.8 l-1.4 0.8 l0.3 -1.6 l-1.2 -1.1 l1.6 -0.2z"/>
<path d="M883.5 215.2 l0.7 1.5 l1.6 0.2 l-1.2 1.1 l0.3 1.6 l-1.4 -0.8 l-1.4 0.8 l0.3 -1.6 l-1.2 -1.1 l1.6 -0.2z M881.6 219.6 l3.8 -4.4" /><path d="M891.4 215.2 l0.7 1.5 l1.6 0.2 l-1.2 1.1 l0.3 1.6 l-1.4 -0.8 l-1.4 0.8 l0.3 -1.6 l-1.2 -1.1 l1.6 -0.2z"/>
<path d="M883.5 260.7 l0.7 1.5 l1.6 0.2 l-1.2 1.1 l0.3 1.6 l-1.4 -0.8 l-1.4 0.8 l0.3 -1.6 l-1.2 -1.1 l1.6 -0.2z M881.6 265.1 l3.8 -4.4" /><path d="M891.4 260.7 l0.7 1.5 l1.6 0.2 l-1.2 1.1 l0.3 1.6 l-1.4 -0.8 l-1.4 0.8 l0.3 -1.6 l-1.2 -1.1 l1.6 -0.2z"/>
<path d="M883.5 306.1 l0.7 1.5 l1.6 0.2 l-1.2 1.1 l0.3 1.6 l-1.4 -0.8 l-1.4 0.8 l0.3 -1.6 l-1.2 -1.1 l1.6 -0.2z M881.6 310.5 l3.8 -4.4" /><path d="M891.4 306.1 l0.7 1.5 l1.6 0.2 l-1.2 1.1 l0.3 1.6 l-1.4 -0.8 l-1.4 0.8 l0.3 -1.6 l-1.2 -1.1 l1.6 -0.2z"/>
<path d="M883.5 351.5 l0.7 1.5 l1.6 0.2 l-1.2 1.1 l0.3 1.6 l-1.4 -0.8 l-1.4 0.8 l0.3 -1.6 l-1.2 -1.1 l1.6 -0.2z M881.6 355.9 l3.8 -4.4" /><path d="M891.4 351.5 l0.7 1.5 l1.6 0.2 l-1.2 1.1 l0.3 1.6 l-1.4 -0.8 l-1.4 0.8 l0.3 -1.6 l-1.2 -1.1 l1.6 -0.2z"/>
<path d="M883.5 396.9 l0.7 1.5 l1.6 0.2 l-1.2 1.1 l0.3 1.6 l-1.4 -0.8 l-1.4 0.8 l0.3 -1.6 l-1.2 -1.1 l1.6 -0.2z M881.6 401.3 l3.8 -4.4" /><path d="M891.4 396.9 l0.7 1.5 l1.6 0.2 l-1.2 1.1 l0.3 1.6 l-1.4 -0.8 l-1.4 0.8 l0.3 -1.6 l-1.2 -1.1 l1.6 -0.2z"/>
</g>
  <path d="M859.8 416.3 l1.8 1.7 l1.8 -1.7" stroke="#444" stroke-width="0.8" fill="none"/>
  <path d="M874 417.2 H892.6" stroke="#dcdcdc" stroke-width="0.7"/>
  <circle cx="872.7" cy="417.1" r="1.8" fill="#fff" stroke="#444" stroke-width="0.65"/>
  <!-- planet -->
  <g transform="translate(0 0.8)">
  <ellipse cx="756.6" cy="376.4" rx="7.4" ry="2.3" fill="none" stroke="#f4f4f4" stroke-width="1" transform="rotate(-12 756.6 376.4)"/>
  <circle cx="756.6" cy="376.2" r="4.9" fill="#343336"/>
  <circle cx="756.6" cy="376.2" r="4.4" fill="none" stroke="#f4f4f4" stroke-width="1.1"/>
  <path d="M749.6 378.2 c1.2 1.6 5.2 1.4 8.2 0.6 c3 -0.8 5.8 -2.4 6 -3.6" fill="none" stroke="#343336" stroke-width="2.2" transform="rotate(0)"/>
  <path d="M749.5 378 c1 1.7 5.3 1.5 8.3 0.7 c3.2 -0.9 6.2 -2.7 6 -4.2" fill="none" stroke="#f4f4f4" stroke-width="1"/>
  <circle cx="755.2" cy="374.6" r="0.55" fill="#f4f4f4"/><circle cx="758.4" cy="374.2" r="0.55" fill="#f4f4f4"/>
  </g>
  <!-- avatar -->
  <circle cx="756.6" cy="405.2" r="8.6" fill="#e9d5da"/>
  <circle cx="756.6" cy="404.8" r="7.6" fill="#d2899a"/>
  <path d="M750.4 407.4 c0 -6 2.6 -8.4 6.2 -8.4 s6.2 2.4 6.2 8.4 c-1.6 3.2 -10.8 3.2 -12.4 0z" fill="#2a2022"/>
  <path d="M753.6 409.8 c0.6 -2.6 5.4 -2.6 6 0 c-0.8 1.8 -5.2 1.8 -6 0z" fill="#f3ece6"/>
  <circle cx="754.2" cy="404.2" r="1.1" fill="#e9e1dc"/><circle cx="759" cy="404.2" r="1.1" fill="#e9e1dc"/>
  <circle cx="756.6" cy="408.6" r="0.9" fill="#222"/>
  <path d="M750.6 401 l1.6 -3.4 l2 2.4z M762.6 401 l-1.6 -3.4 l-2 2.4z" fill="#2a2022"/>
</svg>


<!-- ===== artwork: stroked text + selection ===== -->
<svg style="left:0;top:0" width="1080" height="573" viewBox="0 0 1080 573">
  <text x="406.2" y="286.8" letter-spacing="-0.35" font-family="'Noto Sans CJK SC',sans-serif" font-weight="900" font-size="51.6" fill="#000" stroke="#000" stroke-width="8.4" stroke-linejoin="miter" stroke-miterlimit="10">字体设计</text>
  <g stroke="#4f80ff" stroke-width="0.55" fill="none">
    <rect x="406.6" y="242.2" width="233.2" height="85.2"/>
    <path d="M406.6 286.8 H613.6"/>
  </g>
  <g fill="#4f80ff">
    <rect x="405.5" y="241.1" width="2.2" height="2.2"/><rect x="638.7" y="241.1" width="2.2" height="2.2"/>
    <rect x="405.5" y="326.3" width="2.2" height="2.2"/><rect x="638.7" y="326.3" width="2.2" height="2.2"/>
    <rect x="521.9" y="284.4" width="2.2" height="2.2"/>
  </g>
  <g fill="#fff" stroke="#4f80ff" stroke-width="0.6">
    <circle cx="413" cy="248.6" r="1.3"/><circle cx="633.6" cy="248.6" r="1.3"/>
    <circle cx="413" cy="321.4" r="1.3"/><circle cx="633.6" cy="321.4" r="1.3"/>
    <rect x="405.4" y="250.8" width="3" height="3"/>
    <rect x="638.3" y="316.7" width="3" height="3"/>
  </g>
</svg>

<!-- ===== context menu ===== -->
<div class="a" style="left:539.7px;top:263.8px;width:75.8px;height:152.3px;border-radius:3px;background:radial-gradient(ellipse 34px 22px at 0px 0px,rgba(225,225,225,0.55),rgba(225,225,225,0) 100%),linear-gradient(180deg,#a6a6a6 0px,#b4b4b4 10px,#c4c4c4 20px,#d2d2d2 30px,#dfdfdf 46px,#e8e8e8 70px,#ececec 100%);box-shadow:0 3px 9px rgba(0,0,0,.33),0 0 0 0.5px rgba(0,0,0,.22)"></div>
<div class="a" style="left:539.8px;top:316.4px;width:75.8px;height:7px;background:#4c8bf0"></div>
<div class="a" style="left:539.8px;top:283.5px;width:75.8px;height:0.8px;background:rgba(0,0,0,.13)"></div>
<div class="a" style="left:539.8px;top:313.2px;width:75.8px;height:0.8px;background:rgba(0,0,0,.13)"></div>
<div class="a" style="left:539.8px;top:326.6px;width:75.8px;height:0.8px;background:rgba(0,0,0,.13)"></div>
<div class="a" style="left:539.8px;top:364px;width:75.8px;height:0.8px;background:rgba(0,0,0,.13)"></div>
<div class="t" style="left:548.4px;top:265.4px;font-size:5.8px;font-weight:500;color:#1c1c1c">还原描边</div>
<div class="t" style="left:548.4px;top:273.4px;font-size:5.8px;font-weight:500;color:#9b9b9b">重做</div>
<div class="t" style="left:548.4px;top:287.1px;font-size:5.8px;font-weight:500;color:#1c1c1c">字体</div>
<div class="t" style="left:548.4px;top:295.1px;font-size:5.8px;font-weight:500;color:#1c1c1c">最近使用的字体</div>
<div class="t" style="left:548.4px;top:303.1px;font-size:5.8px;font-weight:500;color:#1c1c1c">大小</div>
<div class="t" style="left:548.4px;top:315.9px;font-size:5.8px;font-weight:500;color:#fff">创建轮廓</div>
<div class="t" style="left:548.4px;top:329.8px;font-size:5.8px;font-weight:500;color:#1c1c1c">插入特殊字符</div>
<div class="t" style="left:548.4px;top:337.8px;font-size:5.8px;font-weight:500;color:#1c1c1c">插入空白字符</div>
<div class="t" style="left:548.4px;top:345.7px;font-size:5.8px;font-weight:500;color:#1c1c1c">插入分隔符</div>
<div class="t" style="left:548.4px;top:353.8px;font-size:5.8px;font-weight:500;color:#1c1c1c">用占位符文本填充</div>
<div class="t" style="left:548.4px;top:366.6px;font-size:5.8px;font-weight:500;color:#1c1c1c">变换</div>
<div class="t" style="left:548.4px;top:374.5px;font-size:5.8px;font-weight:500;color:#1c1c1c">排列</div>
<div class="t" style="left:548.4px;top:382.5px;font-size:5.8px;font-weight:500;color:#1c1c1c">选择</div>
<div class="t" style="left:548.4px;top:390.5px;font-size:5.8px;font-weight:500;color:#1c1c1c">添加到库</div>
<div class="t" style="left:548.4px;top:398.6px;font-size:5.8px;font-weight:500;color:#1c1c1c">收集以导出</div>
<div class="t" style="left:548.4px;top:406.7px;font-size:5.8px;font-weight:500;color:#1c1c1c">导出所选项目...</div>

<svg style="left:0;top:0" width="1080" height="573" viewBox="0 0 1080 573">
  <g fill="#333"><path d="M606.5 289.1 l3.6 2 l-3.6 2z"/><path d="M606.5 297.1 l3.6 2 l-3.6 2z"/><path d="M606.5 305.1 l3.6 2 l-3.6 2z"/><path d="M606.5 331.8 l3.6 2 l-3.6 2z"/><path d="M606.5 339.8 l3.6 2 l-3.6 2z"/><path d="M606.5 347.7 l3.6 2 l-3.6 2z"/><path d="M606.5 368.6 l3.6 2 l-3.6 2z"/><path d="M606.5 376.5 l3.6 2 l-3.6 2z"/><path d="M606.5 384.5 l3.6 2 l-3.6 2z"/><path d="M606.5 400.6 l3.6 2 l-3.6 2z"/></g>
  <!-- cursor -->
  <path d="M550.6 321.2 v6.6 l1.5 -1.4 l1 2.3 l0.9 -0.4 l-1 -2.3 h2z" fill="#111" stroke="#fff" stroke-width="0.45"/>
</svg>


<!-- ===== character panel ===== -->
<div class="a panel" style="left:801.7px;top:451px;width:131.3px;height:98.2px"></div>
<div class="a" style="left:802.5px;top:451.8px;width:129.7px;height:6.7px;background:#464646"></div>
<div class="a" style="left:802.5px;top:458.5px;width:129.7px;height:14.1px;background:#424242"></div>
<div class="a" style="left:802.5px;top:458.5px;width:23.4px;height:14.1px;background:#535353"></div>
<div class="a" style="left:805.8px;top:503.6px;width:123.2px;height:0.8px;background:#484848"></div>
<div class="a field" style="left:805.8px;top:477.1px;width:113px;height:9px"></div>
<div class="a dd" style="left:920.5px;top:477.1px;width:8.5px;height:9px"></div>
<div class="a field" style="left:805.8px;top:490.6px;width:113px;height:9.3px"></div>
<div class="a dd" style="left:920.5px;top:490.6px;width:8.5px;height:9.3px"></div>
<div class="t" style="left:810.2px;top:461.6px;font-size:5.8px;color:#f0f0f0">字符</div>
<div class="t" style="left:819.8px;top:478.8px;font-size:6.7px;color:#ececec">思源黑体</div>
<div class="t" style="left:808.8px;top:489.5px;font-size:7.4px;color:#ececec">Heavy</div>

  <div class="a dd" style="left:817.4px;top:508.0px;width:8.2px;height:9.4px"></div>
  <div class="a field" style="left:827.2px;top:508.0px;width:24.2px;height:9.4px"></div>
  <div class="a dd" style="left:853.1px;top:508.0px;width:7.9px;height:9.4px"></div>
  <div class="a dd" style="left:884.8px;top:508.0px;width:7.9px;height:9.4px"></div>
  <div class="a field" style="left:894.2px;top:508.0px;width:24.6px;height:9.4px"></div>
  <div class="a dd" style="left:920.5px;top:508.0px;width:8.5px;height:9.4px"></div>
  <div class="t" style="left:828.6px;top:507.8px;font-size:6.9px;color:#e6e6e6">80 pt</div>
  <div class="t" style="left:895.6px;top:507.4px;font-size:6.9px;color:#e6e6e6">(96 pt)</div>
  <div class="a dd" style="left:817.4px;top:521.8px;width:8.2px;height:9.4px"></div>
  <div class="a field" style="left:827.2px;top:521.8px;width:24.2px;height:9.4px"></div>
  <div class="a dd" style="left:853.1px;top:521.8px;width:7.9px;height:9.4px"></div>
  <div class="a dd" style="left:884.8px;top:521.8px;width:7.9px;height:9.4px"></div>
  <div class="a field" style="left:894.2px;top:521.8px;width:24.6px;height:9.4px"></div>
  <div class="a dd" style="left:920.5px;top:521.8px;width:8.5px;height:9.4px"></div>
  <div class="t" style="left:828.6px;top:521.6px;font-size:6.9px;color:#e6e6e6">100%</div>
  <div class="t" style="left:895.6px;top:521.6px;font-size:6.9px;color:#e6e6e6">100%</div>
  <div class="a dd" style="left:817.4px;top:535.4px;width:8.2px;height:9.4px"></div>
  <div class="a field" style="left:827.2px;top:535.4px;width:24.2px;height:9.4px"></div>
  <div class="a dd" style="left:853.1px;top:535.4px;width:7.9px;height:9.4px"></div>
  <div class="a dd" style="left:884.8px;top:535.4px;width:7.9px;height:9.4px"></div>
  <div class="a field" style="left:894.2px;top:535.4px;width:24.6px;height:9.4px"></div>
  <div class="a dd" style="left:920.5px;top:535.4px;width:8.5px;height:9.4px"></div>
  <div class="t" style="left:828.6px;top:535.3px;font-size:5.9px;color:#e6e6e6">自动</div>
  <div class="t" style="left:895.6px;top:535.7px;font-size:6.9px;color:#e6e6e6">0</div>
<svg style="left:0;top:0" width="1080" height="573" viewBox="0 0 1080 573">
  <path d="M805 453.4 l3 3 m0 -3 l-3 3" stroke="#c4c4c4" stroke-width="0.7"/>
  <path d="M926.2 454 l-1 1 l1 1 m1.6 -2 l-1 1 l1 1" stroke="#9a9a9a" stroke-width="0.5" fill="none"/>
  <path d="M924 464 h5.2 M924 465.7 h5.2 M924 467.4 h5.2" stroke="#c4c4c4" stroke-width="0.8"/>
  <path d="M806.4 464 l1 1.5 l-1 1.5 l-1 -1.5z" fill="none" stroke="#8a8a8a" stroke-width="0.4"/>
  <circle cx="810.4" cy="480.8" r="1.7" fill="none" stroke="#cfcfcf" stroke-width="0.7"/>
  <path d="M809.2 482 l-2.2 2.2" stroke="#cfcfcf" stroke-width="0.8"/>
  <path d="M812.6 482.8 h2 l-1 1.1z" fill="#cfcfcf"/>
  <path d="M819.7 511.5 l1.8 -1.6 l1.8 1.6 M819.7 513.9 l1.8 1.6 l1.8 -1.6 M855.2 511.9 l1.8 1.7 l1.8 -1.7 M886.9 511.5 l1.8 -1.6 l1.8 1.6 M886.9 513.9 l1.8 1.6 l1.8 -1.6 M922.9 511.9 l1.8 1.7 l1.8 -1.7 M819.7 525.3 l1.8 -1.6 l1.8 1.6 M819.7 527.7 l1.8 1.6 l1.8 -1.6 M855.2 525.7 l1.8 1.7 l1.8 -1.7 M886.9 525.3 l1.8 -1.6 l1.8 1.6 M886.9 527.7 l1.8 1.6 l1.8 -1.6 M922.9 525.7 l1.8 1.7 l1.8 -1.7 M819.7 538.9 l1.8 -1.6 l1.8 1.6 M819.7 541.3 l1.8 1.6 l1.8 -1.6 M855.2 539.3 l1.8 1.7 l1.8 -1.7 M886.9 538.9 l1.8 -1.6 l1.8 1.6 M886.9 541.3 l1.8 1.6 l1.8 -1.6 M922.9 539.3 l1.8 1.7 l1.8 -1.7 M922.9 480.8 l1.8 1.7 l1.8 -1.7 M922.9 494.4 l1.8 1.7 l1.8 -1.7" stroke="#e4e4e4" stroke-width="0.95" fill="none"/>
  <g fill="#d8d8d8">
    <!-- font size TT -->
    <path d="M808.6 508.6 h6.6 v1.7 h-0.6 l-0.3 -0.9 h-1.8 v6.1 l1 0.2 v0.5 h-3.2 v-0.5 l1 -0.2 v-6.1 h-1.8 l-0.3 0.9 h-0.6z"/>
    <path d="M805.4 512.6 h3.8 v1.1 h-0.4 l-0.2 -0.5 h-0.9 v3 l0.6 0.1 v0.4 h-2 v-0.4 l0.6 -0.1 v-3 h-0.9 l-0.2 0.5 h-0.4z"/>
    <!-- vertical scale -->
    <path d="M808.6 522.3 h6.6 v1.7 h-0.6 l-0.3 -0.9 h-1.8 v6.1 l1 0.2 v0.5 h-3.2 v-0.5 l1 -0.2 v-6.1 h-1.8 l-0.3 0.9 h-0.6z"/>
    <path d="M806.4 522 l1 1.5 h-0.7 v5.4 h0.7 l-1 1.5 l-1 -1.5 h0.7 v-5.4 h-0.7z"/>
    <!-- horizontal scale -->
    <path d="M874 521.8 h6.6 v1.7 h-0.6 l-0.3 -0.9 h-1.8 v4.9 l1 0.2 v0.5 h-3.2 v-0.5 l1 -0.2 v-4.9 h-1.8 l-0.3 0.9 h-0.6z"/>
    <path d="M873.2 530.2 l1.4 -1 v0.7 h5.4 v-0.7 l1.4 1 l-1.4 1 v-0.7 h-5.4 v0.7z"/>
    <!-- leading -->
    <path d="M877.6 507.4 l1.3 3.2 h-0.8 l-0.2 -0.7 h-1 l-0.2 0.7 h-0.7z"/>
    <path d="M877.6 511.6 l2 4.6 h-1 l-0.4 -1 h-1.6 l-0.4 1 h-0.9z"/>
    <path d="M874.2 511.2 l1 1.4 h-0.7 v2.6 h0.7 l-1 1.4 l-1 -1.4 h0.7 v-2.6 h-0.7z"/>
    <rect x="875.4" y="516.6" width="5.4" height="0.7"/><rect x="875.4" y="510.7" width="5.4" height="0.5"/>
    <!-- kerning VA -->
    <path d="M805.6 535.8 h0.9 l1.5 4.6 l1.5 -4.6 h0.9 l-2 6 h-0.8z"/>
    <path d="M811.6 535.8 l2 6 h-0.9 l-0.4 -1.3 h-1.6 l-0.4 1.3 h-0.9 l2 -6z" transform="translate(0.4 0)"/>
    <path d="M809.2 542.4 h3.6 v-0.6 l1.2 0.9 l-1.2 0.9 v-0.6 h-3.6z"/>
    <!-- tracking VA boxed -->
    <rect x="872.8" y="535.2" width="8.8" height="6" fill="#d8d8d8"/>
    <path d="M872.6 543.4 l1.2 -0.9 v0.6 h6.6 v-0.6 l1.2 0.9 l-1.2 0.9 v-0.6 h-6.6 v0.6z"/>
  </g>
  <path d="M874 536.2 l1.4 4 l1.4 -4 M877.8 540.4 l1.4 -4 l1.4 4 M878.3 539.2 h1.8" stroke="#535353" stroke-width="0.7" fill="none"/>
</svg>

<!-- ===== status bar (clipped) ===== -->
<div class="a" style="left:37px;top:568.4px;width:907px;height:5px;background:#444"></div>
<div class="a" style="left:37px;top:568.8px;width:26px;height:5px;background:#3a3a3a"></div>
<div class="a" style="left:98px;top:568.8px;width:20px;height:5px;background:#3a3a3a"></div>
<div class="a" style="left:286px;top:568.6px;width:658px;height:5px;background:#4a4a4a"></div>
<div class="t" style="left:41px;top:567.5px;font-size:6.6px;color:#dcdcdc">100%</div>
<div class="t" style="left:100.8px;top:567.5px;font-size:6.6px;color:#dcdcdc">1</div>
<div class="t" style="left:191px;top:567.2px;font-size:6.4px;color:#bdbdbd">直接选择</div>
<svg style="left:0;top:0" width="1080" height="573" viewBox="0 0 1080 573">
  <path d="M68 571.6 l1.6 1.5 l1.6 -1.5 M123 571.6 l1.6 1.5 l1.6 -1.5" stroke="#9a9a9a" stroke-width="0.7" fill="none"/>
  <path d="M260.6 570 l3.2 2.4 l-3.2 2.4z" fill="#cfcfcf"/>
  <path d="M270.4 573 l2.2 -3" stroke="#9a9a9a" stroke-width="0.7"/>
  <path d="M942 569.4 l1.6 1.6 l-1.6 1.6" stroke="#9a9a9a" stroke-width="0.7" fill="none"/>
</svg>

</div></body></html>
